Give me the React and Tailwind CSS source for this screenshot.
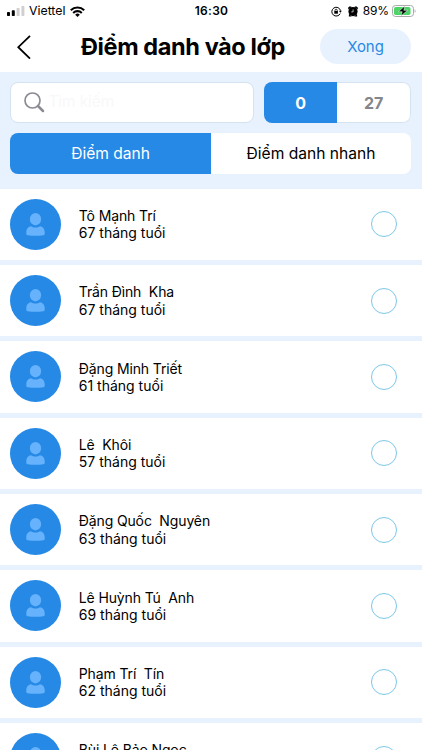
import React, { useState } from 'react';

const students = [
  { id: 1, name: 'Tô Mạnh Trí', months: 67 },
  { id: 2, name: 'Trần Đình  Kha', months: 67 },
  { id: 3, name: 'Đặng Minh Triết', months: 61 },
  { id: 4, name: 'Lê  Khôi', months: 57 },
  { id: 5, name: 'Đặng Quốc  Nguyên', months: 63 },
  { id: 6, name: 'Lê Huỳnh Tú  Anh', months: 69 },
  { id: 7, name: 'Phạm Trí  Tín', months: 62 },
  { id: 8, name: 'Bùi Lê Bảo Ngọc', months: 65 },
];

const StatusBar = () => (
  <div className="grid h-[22px] shrink-0 grid-cols-3 items-center pl-[7px] pr-[6px] text-[12px] leading-[22px]">
    <div className="flex items-center">
      <svg width="18" height="10" viewBox="0 0 18 10">
        <rect x="0" y="6" width="3" height="4" rx="0.7" fill="#000" />
        <rect x="4.8" y="4.3" width="3" height="5.7" rx="0.7" fill="#000" />
        <rect x="9.6" y="2" width="3" height="8" rx="0.7" fill="#d0d0d0" />
        <rect x="14.4" y="0" width="3" height="10" rx="0.7" fill="#d0d0d0" />
      </svg>
      <span className="ml-1 text-[12.3px]">Viettel</span>
      <svg className="ml-[5px]" width="15" height="11" viewBox="0 0 15 11" fill="none" stroke="#000" strokeWidth="2.1">
        <path d="M0.8 4.2a9.6 9.6 0 0 1 13.4 0" />
        <path d="M3.2 6.9a6.1 6.1 0 0 1 8.6 0" />
        <path d="M7.5 11 5.2 8.8a3.2 3.2 0 0 1 4.600 0Z" fill="#000" stroke="none" />
      </svg>
    </div>
    <div className="text-center font-semibold tracking-[0.3px]">16:30</div>
    <div className="flex items-center justify-end">
      <svg width="11" height="11" viewBox="0 0 11 11" fill="none" stroke="#000">
        <path d="M9.2 7.6A4.4 4.4 0 1 1 9.5 4.5" />
        <path d="M7.9 4.7h3L9.4 6.8Z" fill="#000" stroke="none" />
        <rect x="3.3" y="5" width="3.6" height="2.7" fill="#000" stroke="none" />
        <path d="M4 5.2V4.3a1.1 1.1 0 0 1 2.2 0v.9" strokeWidth="0.8" />
      </svg>
      <svg className="ml-[6px]" width="10" height="11" viewBox="0 0 10 11">
        <circle cx="5" cy="5.6" r="4.6" />
        <path d="M0.2 3.400V1.400L1.900 0.200l2 .7ZM9.800 3.400V1.400L8.100.200l-2 .7ZM1 7.800l-.2 2.800h3ZM9 7.800l.2 2.800h-3Z" />
        <path d="M5.100 3.400v2.500H3.300" fill="none" stroke="#fff" strokeWidth="0.7" />
      </svg>
      <span className="ml-[5px] tracking-[-0.1px]">89%</span>
      <svg className="ml-[3px]" width="24" height="12" viewBox="0 0 24 12">
        <rect x="0.5" y="0.5" width="21" height="11" rx="3" fill="#fff" stroke="#a9a9a9" />
        <rect x="2" y="2" width="16.5" height="8" rx="1.8" fill="#4cd467" />
        <path d="M22.6 4.2c1.3.5 1.3 3.1 0 3.6Z" fill="#a9a9a9" />
        <path d="M12.8 1 6.400 6.700h3.800L9 11l6.600-5.700h-3.800Z" fill="#000" stroke="#fff" strokeWidth="0.5" />
      </svg>
    </div>
  </div>
);

const Header = () => (
  <div className="flex h-[50px] shrink-0 items-center pb-[1px] pl-[17px] pr-[11px]">
    <button className="flex w-[54px]">
      <svg width="14" height="24" viewBox="0 0 14 24" fill="none" stroke="#000" strokeWidth="1.8">
        <path d="M13 0.8 1.3 12.2 13 23.6" />
      </svg>
    </button>
    <h1 className="flex-1 whitespace-nowrap pl-[10px] text-[23.5px] font-bold leading-7 tracking-[-0.4px]">
      Điểm danh vào lớp
    </h1>
    <button className="h-[35px] w-[91px] shrink-0 rounded-full bg-[#e8f2fe] pt-[1px] text-[15px] tracking-[-0.1px] text-[#2889e4]">
      Xong
    </button>
  </div>
);

const Avatar = () => (
  <div className="flex size-[51px] shrink-0 items-center justify-center rounded-full bg-[#2589e5]">
    <svg width="19" height="23" viewBox="0 0 19 23" fill="#66b2fc">
      <ellipse cx="9.5" cy="6.2" rx="5.6" ry="6.2" />
      <path d="M5 13.3c1.300.9 2.700 1.300 4.500 1.300s3.200-.4 4.500-1.300c2.700.3 4.700 2.700 4.700 5.800v1.700c0 .8-.5 1.200-1.200 1.400-5.300.7-10.700.7-16 0-.7-.2-1.200-.6-1.200-1.400v-1.700c0-3.100 2-5.500 4.700-5.800Z" />
    </svg>
  </div>
);

const StudentRow = ({ student, checked, onToggle }) => (
  <div
    onClick={() => onToggle(student.id)}
    className="flex h-[76.35px] shrink-0 items-center border-b-[5px] border-[#e8f2fe] bg-white pl-[10.400px] pr-[25px]"
  >
    <Avatar />
    <div className="ml-[17.400px] flex-1 whitespace-pre text-[14px] leading-[17.3px]">
      <p className="tracking-[-0.13px]">{student.name}</p>
      <p>{student.months} tháng tuổi</p>
    </div>
    <span className={`size-[26px] rounded-full border border-[#7cc8e8] ${checked ? 'bg-[#2589e5]' : ''}`} />
  </div>
);

export default function App() {
  const [selected, setSelected] = useState([]);

  const toggle = (id) => {
    setSelected((prev) => (prev.includes(id) ? prev.filter((x) => x !== id) : [...prev, id]));
  };

  return (
    <div className="flex h-[750px] w-[422px] flex-col overflow-hidden bg-white font-['Inter','Liberation_Sans',sans-serif] text-black">
      <StatusBar />
      <Header />

      <div className="flex h-[116.6px] shrink-0 flex-col gap-[10px] bg-[#e8f2fe] pl-[10.4px] pr-[10.8px] pt-[10px]">
        <div className="flex h-[41px] shrink-0 gap-[10px]">
          <div className="flex flex-1 items-center rounded-[8px] border border-[#d5e2f0] bg-white pl-[13px]">
            <svg width="21" height="21" viewBox="0 0 21 21" fill="none" stroke="#8b8b93">
              <circle cx="8.5" cy="8.5" r="7.5" strokeWidth="1.7" />
              <path d="m14 14 5 5" strokeWidth="2.5" strokeLinecap="round" />
            </svg>
            <span className="ml-[3px] text-[15.3px] text-[#f8f8fa]">Tìm kiếm</span>
          </div>
          <div className="flex w-[147px] overflow-hidden rounded-[8px] text-[16px] font-bold">
            <div className="flex w-[73px] items-center justify-center bg-[#2589e5] text-white">{selected.length}</div>
            <div className="flex flex-1 items-center justify-center rounded-r-[8px] border border-l-0 border-[#d5e2f0] bg-white text-[#85858a]">
              {27 - selected.length}
            </div>
          </div>
        </div>
        <div className="flex h-[41px] shrink-0 overflow-hidden rounded-[8px] text-[15.6px]">
          <button className="flex-1 bg-[#2589e5] text-white">Điểm danh</button>
          <button className="flex-1 bg-white">Điểm danh nhanh</button>
        </div>
      </div>

      <div className="flex min-h-0 flex-1 flex-col overflow-hidden">
        {students.map((student) => (
          <StudentRow
            key={student.id}
            student={student}
            checked={selected.includes(student.id)}
            onToggle={toggle}
          />
        ))}
      </div>
    </div>
  );
}
